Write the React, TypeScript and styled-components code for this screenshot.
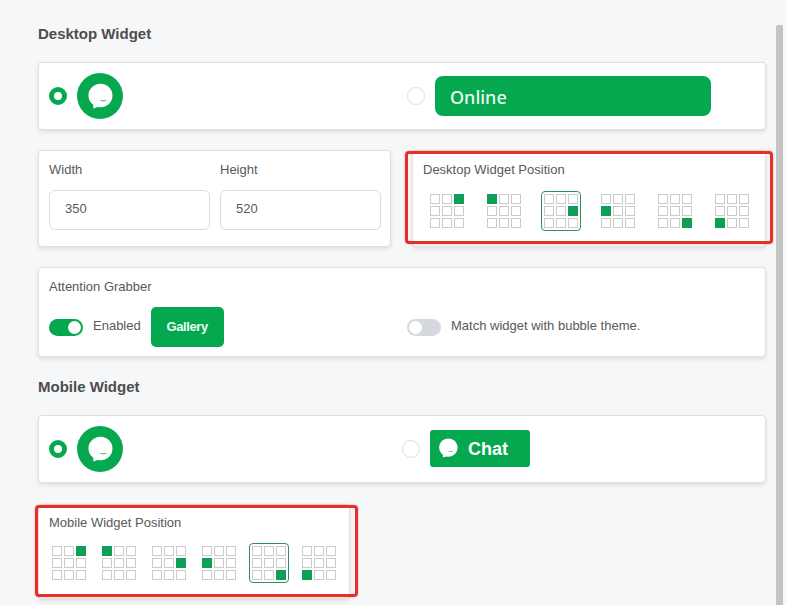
import styled, { createGlobalStyle } from "styled-components";

const GREEN = "#06a84f";
const SQUARE_GREEN = "#0d9f55";

const GlobalStyle = createGlobalStyle`
  html, body {
    margin: 0;
    height: 100%;
    overflow: hidden;
    background: #f6f7f9;
  }
`;

const Page = styled.div`
  width: 728px;
  padding: 0 20px 0 38px;
  font-family: "Liberation Sans", Arial, sans-serif;
  font-size: 13px;
  color: #595959;
`;

const Scrollbar = styled.div`
  position: fixed;
  left: 776px;
  top: 25px;
  bottom: 0;
  width: 7px;
  border-radius: 2px 2px 0 0;
  background: #c4c4c4;
`;

const Heading = styled.h2<{ $top: number; $bottom: number }>`
  margin: ${(p) => p.$top}px 0 ${(p) => p.$bottom}px;
  font-size: 15px;
  line-height: 16px;
  font-weight: 700;
  color: #4d4d4d;
`;

const Card = styled.div`
  position: relative;
  box-sizing: border-box;
  background: #fff;
  border: 1px solid #e0e0e3;
  border-radius: 4px;
  box-shadow: 0 2px 4px rgba(0, 0, 0, 0.1);
`;

const ChoiceCard = styled(Card)<{ $first: number }>`
  display: grid;
  grid-template-columns: ${(p) => p.$first}px 1fr;
  align-items: center;
  height: 68px;
  padding: 0 10px;
`;

const Choice = styled.div`
  display: flex;
  align-items: center;
  gap: 10px;
`;

const Radio = styled.span<{ $on?: boolean }>`
  box-sizing: border-box;
  flex: none;
  width: 18px;
  height: 18px;
  border-radius: 50%;
  background: #fff;
  border: ${(p) => (p.$on ? `5px solid ${GREEN}` : "1px solid #dedede")};
`;

const RoundBubble = styled.div`
  display: flex;
  align-items: center;
  justify-content: center;
  width: 46px;
  height: 46px;
  border-radius: 50%;
  background: ${GREEN};
`;

const OnlinePill = styled.div`
  display: flex;
  align-items: center;
  box-sizing: border-box;
  width: 276px;
  height: 40px;
  padding: 2px 0 0 15px;
  border-radius: 8px;
  background: ${GREEN};
  color: #e6fff0;
  font-family: "Noto Sans", sans-serif;
  font-size: 18px;
  font-weight: 500;
`;

const ChatPill = styled.div`
  display: flex;
  align-items: center;
  gap: 10px;
  box-sizing: border-box;
  width: 100px;
  height: 37px;
  margin-bottom: 2px;
  padding-left: 8px;
  border-radius: 3px;
  background: ${GREEN};
  color: #fff;
  font-size: 18px;
  font-weight: 700;
`;

const ChatLabel = styled.span`
  margin-top: 3px;
`;

const SizeRow = styled.div`
  display: grid;
  grid-template-columns: 353px 354px;
  gap: 21px;
  margin: 20px 0;
`;

const SizeCard = styled(Card)`
  display: grid;
  grid-template-columns: 161px 161px;
  column-gap: 10px;
  align-content: start;
  height: 97px;
  padding: 12px 10px 0;
`;

const FieldLabel = styled.div`
  line-height: 14px;
  margin-bottom: 13px;
`;

const Input = styled.div`
  box-sizing: border-box;
  height: 40px;
  padding: 0 15px;
  line-height: 36px;
  border: 1px solid #dcdcdc;
  border-radius: 6px;
`;

const PositionCard = styled(Card)<{ $width?: number }>`
  height: ${(p) => (p.$width ? 95 : 97)}px;
  width: ${(p) => (p.$width ? `${p.$width}px` : "auto")};
  padding: ${(p) => (p.$width ? 11 : 12)}px 10px 0;
`;

const PositionTitle = styled.div`
  line-height: 14px;
`;

const Frame = styled.div<{ $l: number; $r: number; $t: number; $b: number }>`
  position: absolute;
  left: ${(p) => p.$l}px;
  right: ${(p) => p.$r}px;
  top: ${(p) => p.$t}px;
  bottom: ${(p) => p.$b}px;
  border: 3px solid #e3302a;
  border-radius: 4px;
  box-shadow: 0 0 2px rgba(227, 48, 42, 0.45);
  pointer-events: none;
`;

const Options = styled.div<{ $gap: number; $indent: number; $top: number }>`
  display: flex;
  gap: ${(p) => p.$gap}px;
  margin: ${(p) => p.$top}px 0 0 ${(p) => p.$indent}px;
`;

const Option = styled.div<{ $selected?: boolean }>`
  box-sizing: border-box;
  display: grid;
  grid-template-columns: repeat(3, 10px);
  grid-auto-rows: 10px;
  gap: 2px;
  align-content: center;
  justify-content: center;
  width: 40px;
  height: 40px;
  border-radius: 4px;
  border: 1px solid ${(p) => (p.$selected ? "#2f8f63" : "transparent")};
`;

const Square = styled.span<{ $on?: boolean }>`
  box-sizing: border-box;
  border: 1px solid ${(p) => (p.$on ? SQUARE_GREEN : "#cbcbcb")};
  background: ${(p) => (p.$on ? SQUARE_GREEN : "#fff")};
`;

const AttentionCard = styled(Card)`
  height: 90px;
  padding: 12px 10px 0;
`;

const AttentionRow = styled.div`
  display: grid;
  grid-template-columns: 358px 1fr;
  align-items: center;
`;

const Toggle = styled.span<{ $on?: boolean }>`
  position: relative;
  flex: none;
  display: block;
  width: 34px;
  height: 17px;
  border-radius: 9px;
  background: ${(p) => (p.$on ? GREEN : "#d6d8df")};

  &::after {
    content: "";
    position: absolute;
    top: 2px;
    ${(p) => (p.$on ? "right: 2px;" : "left: 2px;")}
    width: 13px;
    height: 13px;
    border-radius: 50%;
    background: #fff;
  }
`;

const ToggleText = styled.span`
  margin-bottom: 4px;
`;

const GalleryButton = styled.div`
  display: flex;
  align-items: center;
  justify-content: center;
  box-sizing: border-box;
  width: 73px;
  height: 40px;
  padding-bottom: 2px;
  border-radius: 5px;
  background: ${GREEN};
  color: #e6fff0;
  font-weight: 700;
  letter-spacing: -0.4px;
`;

const MobilePosition = styled.div`
  margin-top: 21px;
`;

function BubbleIcon({ size }: { size: number }) {
  return (
    <svg width={size} height={size} viewBox="0 0 25 25">
      <path
        fill="#fff"
        d="M13 .7C6.600.7 1.400 5.700 1.400 11.900c0 3.700 1.800 6.900 4.600 8.900l.1 3.700 4.100-1.500c.9.200 1.800.3 2.800.3 6.400 0 11.500-5 11.500-11.400C24.500 5.700 19.400.7 13 .7z"
      />
      <path fill={GREEN} d="M12.600 16.300c1.900.6 4.300.6 6.300-.1-.9 1.800-5.100 2-6.300.1z" />
    </svg>
  );
}

type PositionOptionsProps = {
  spots: number[];
  selected: number;
  gap: number;
  indent: number;
  top: number;
};

function PositionOptions({ spots, selected, gap, indent, top }: PositionOptionsProps) {
  return (
    <Options $gap={gap} $indent={indent} $top={top}>
      {spots.map((spot, i) => (
        <Option key={i} $selected={i === selected}>
          {Array.from({ length: 9 }, (_, n) => (
            <Square key={n} $on={n === spot} />
          ))}
        </Option>
      ))}
    </Options>
  );
}

const spots = [2, 0, 5, 3, 8, 6];

export default function App() {
  return (
    <>
      <GlobalStyle />
      <Page>
        <Heading $top={26} $bottom={20}>Desktop Widget</Heading>
        <ChoiceCard $first={358}>
          <Choice>
            <Radio $on />
            <RoundBubble>
              <BubbleIcon size={26} />
            </RoundBubble>
          </Choice>
          <Choice>
            <Radio />
            <OnlinePill>Online</OnlinePill>
          </Choice>
        </ChoiceCard>

        <SizeRow>
          <SizeCard>
            <FieldLabel>Width</FieldLabel>
            <FieldLabel>Height</FieldLabel>
            <Input>350</Input>
            <Input>520</Input>
          </SizeCard>
          <PositionCard>
            <PositionTitle>Desktop Widget Position</PositionTitle>
            <PositionOptions spots={spots} selected={2} gap={17} indent={4} top={14} />
            <Frame $l={-8} $r={-8} $t={0} $b={2} />
          </PositionCard>
        </SizeRow>

        <AttentionCard>
          <FieldLabel>Attention Grabber</FieldLabel>
          <AttentionRow>
            <Choice>
              <Toggle $on />
              <ToggleText>Enabled</ToggleText>
              <GalleryButton>Gallery</GalleryButton>
            </Choice>
            <Choice>
              <Toggle />
              <ToggleText>Match widget with bubble theme.</ToggleText>
            </Choice>
          </AttentionRow>
        </AttentionCard>

        <Heading $top={22} $bottom={20}>Mobile Widget</Heading>
        <ChoiceCard $first={353}>
          <Choice>
            <Radio $on />
            <RoundBubble>
              <BubbleIcon size={26} />
            </RoundBubble>
          </Choice>
          <Choice>
            <Radio />
            <ChatPill>
              <BubbleIcon size={20} />
              <ChatLabel>Chat</ChatLabel>
            </ChatPill>
          </Choice>
        </ChoiceCard>

        <MobilePosition>
          <PositionCard $width={312}>
            <PositionTitle>Mobile Widget Position</PositionTitle>
            <PositionOptions spots={spots} selected={4} gap={10} indent={0} top={13} />
            <Frame $l={-4} $r={-9} $t={0} $b={1} />
          </PositionCard>
        </MobilePosition>
      </Page>
      <Scrollbar />
    </>
  );
}
